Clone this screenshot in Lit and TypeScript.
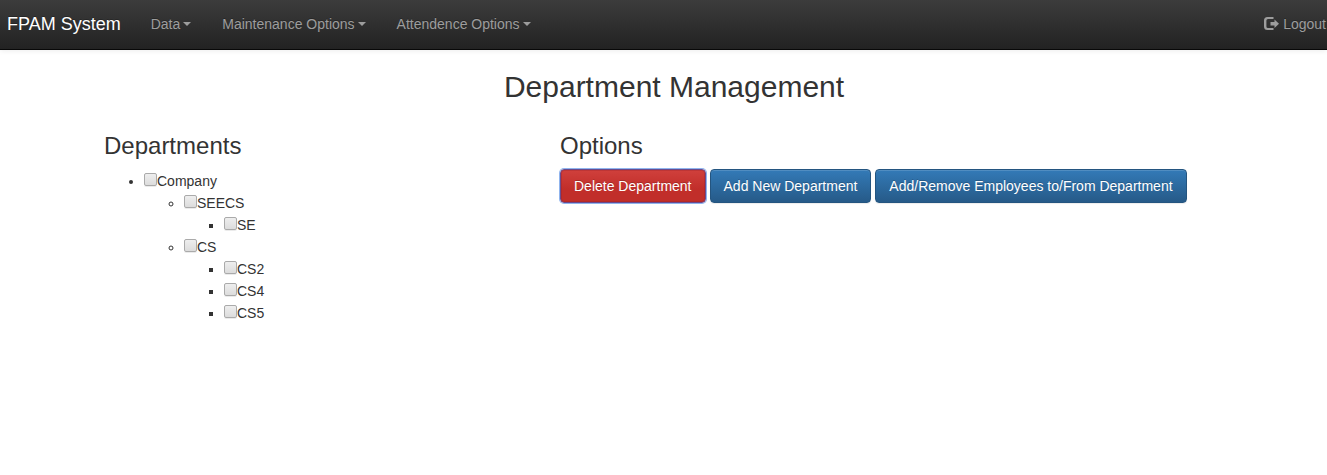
import { LitElement, html, css, nothing, type TemplateResult } from "lit";
import { customElement } from "lit/decorators.js";

interface Department {
  name: string;
  children?: Department[];
}

const departments: Department[] = [
  {
    name: "Company",
    children: [
      { name: "SEECS", children: [{ name: "SE" }] },
      { name: "CS", children: [{ name: "CS2" }, { name: "CS4" }, { name: "CS5" }] },
    ],
  },
];

const menus = ["Data", "Maintenance Options", "Attendence Options"];

@customElement("app-root")
export class AppRoot extends LitElement {
  static styles = css`
    :host {
      display: block;
      color: #333;
      font: 14px/20px "Helvetica Neue", "Liberation Sans", Arial, sans-serif;
    }
    * {
      box-sizing: border-box;
    }
    .navbar {
      display: flex;
      align-items: center;
      height: 50px;
      padding: 0 1px 2px 7px;
      background: linear-gradient(to bottom, #3c3c3c 0%, #222 100%);
      border-bottom: 1px solid #080808;
      box-shadow: 0 1px 5px rgba(0, 0, 0, 0.075);
      text-shadow: 0 -1px 0 rgba(0, 0, 0, 0.25);
      white-space: nowrap;
    }
    .brand {
      color: #fff;
      font-size: 18px;
      text-decoration: none;
    }
    .menus {
      display: flex;
      gap: 31px;
      margin: 0 auto 0 30px;
      padding: 0;
      list-style: none;
    }
    .link {
      display: flex;
      align-items: center;
      color: #9d9d9d;
      text-decoration: none;
    }
    .caret {
      margin-left: 3px;
      border-top: 4px solid;
      border-left: 4px solid transparent;
      border-right: 4px solid transparent;
    }
    .logout {
      gap: 4px;
    }
    .icon {
      width: 15px;
      height: 14px;
      fill: currentColor;
    }
    .container {
      max-width: 1161px;
      margin: 0 auto;
      padding-left: 21px;
    }
    .title {
      margin: 20px 0 30px;
      font-size: 30px;
      line-height: 33px;
      font-weight: 400;
      text-align: center;
    }
    .columns {
      display: grid;
      grid-template-columns: 2fr 3fr;
    }
    .subtitle {
      margin: 0 0 10px;
      font-size: 24px;
      line-height: 26px;
      font-weight: 400;
    }
    .tree {
      margin: 0;
      padding-left: 40px;
    }
    .node {
      display: flex;
      align-items: center;
      width: max-content;
      padding-top: 2px;
    }
    .check {
      appearance: none;
      width: 13px;
      height: 13px;
      margin: 0 0 3px;
      border: 1px solid #aaa;
      border-radius: 2px;
      background: linear-gradient(to bottom, #eee, #dcdcdc);
      box-shadow: 0 1px 0 rgba(0, 0, 0, 0.08);
    }
    .check:checked {
      background: #337ab7;
    }
    .actions {
      display: flex;
      flex-wrap: wrap;
      gap: 4px;
    }
    .btn {
      padding: 6px 13px;
      border: 1px solid #245580;
      border-radius: 4px;
      background: linear-gradient(to bottom, #337ab7 0%, #265a88 100%);
      box-shadow: inset 0 1px 0 rgba(255, 255, 255, 0.15), 0 1px 1px rgba(0, 0, 0, 0.075);
      color: #fff;
      font: inherit;
      text-shadow: 0 -1px 0 rgba(0, 0, 0, 0.2);
      cursor: pointer;
    }
    .danger {
      border-color: #6b4a8c;
      background: linear-gradient(to bottom, #d0403c 0%, #c12e2a 60%);
      box-shadow: inset 0 0 0 1px rgba(150, 30, 40, 0.3), 0 0 0 1px #8fb4ee;
    }
  `;

  private renderTree(items: Department[]): TemplateResult {
    return html`<ul class="tree">
      ${items.map(
        (item) => html`<li>
          <label class="node"><input class="check" type="checkbox" />${item.name}</label>
          ${item.children ? this.renderTree(item.children) : nothing}
        </li>`
      )}
    </ul>`;
  }

  render() {
    return html`
      <nav class="navbar">
        <a class="brand" href="#">FPAM System</a>
        <ul class="menus">
          ${menus.map(
            (menu) => html`<li><a class="link" href="#">${menu}<span class="caret"></span></a></li>`
          )}
        </ul>
        <a class="link logout" href="#">
          <svg class="icon" viewBox="0 0 15 14" aria-hidden="true">
            <path d="M9.500 0H3.500A3.500 3.500 0 0 0 0 3.500v6A3.500 3.500 0 0 0 3.500 13h6v-2H4a1.600 1.600 0 0 1-1.600-1.600V3.600A1.600 1.600 0 0 1 4 2h5.500z" />
            <path d="M10.500 2.500 15 6.700l-4.500 4.200V8.500H6.500V5h4z" />
          </svg>
          Logout
        </a>
      </nav>
      <main class="container">
        <h2 class="title">Department Management</h2>
        <div class="columns">
          <section>
            <h3 class="subtitle">Departments</h3>
            ${this.renderTree(departments)}
          </section>
          <section>
            <h3 class="subtitle">Options</h3>
            <div class="actions">
              <button class="btn danger" type="button">Delete Department</button>
              <button class="btn" type="button">Add New Department</button>
              <button class="btn" type="button">Add/Remove Employees to/From Department</button>
            </div>
          </section>
        </div>
      </main>
    `;
  }
}
